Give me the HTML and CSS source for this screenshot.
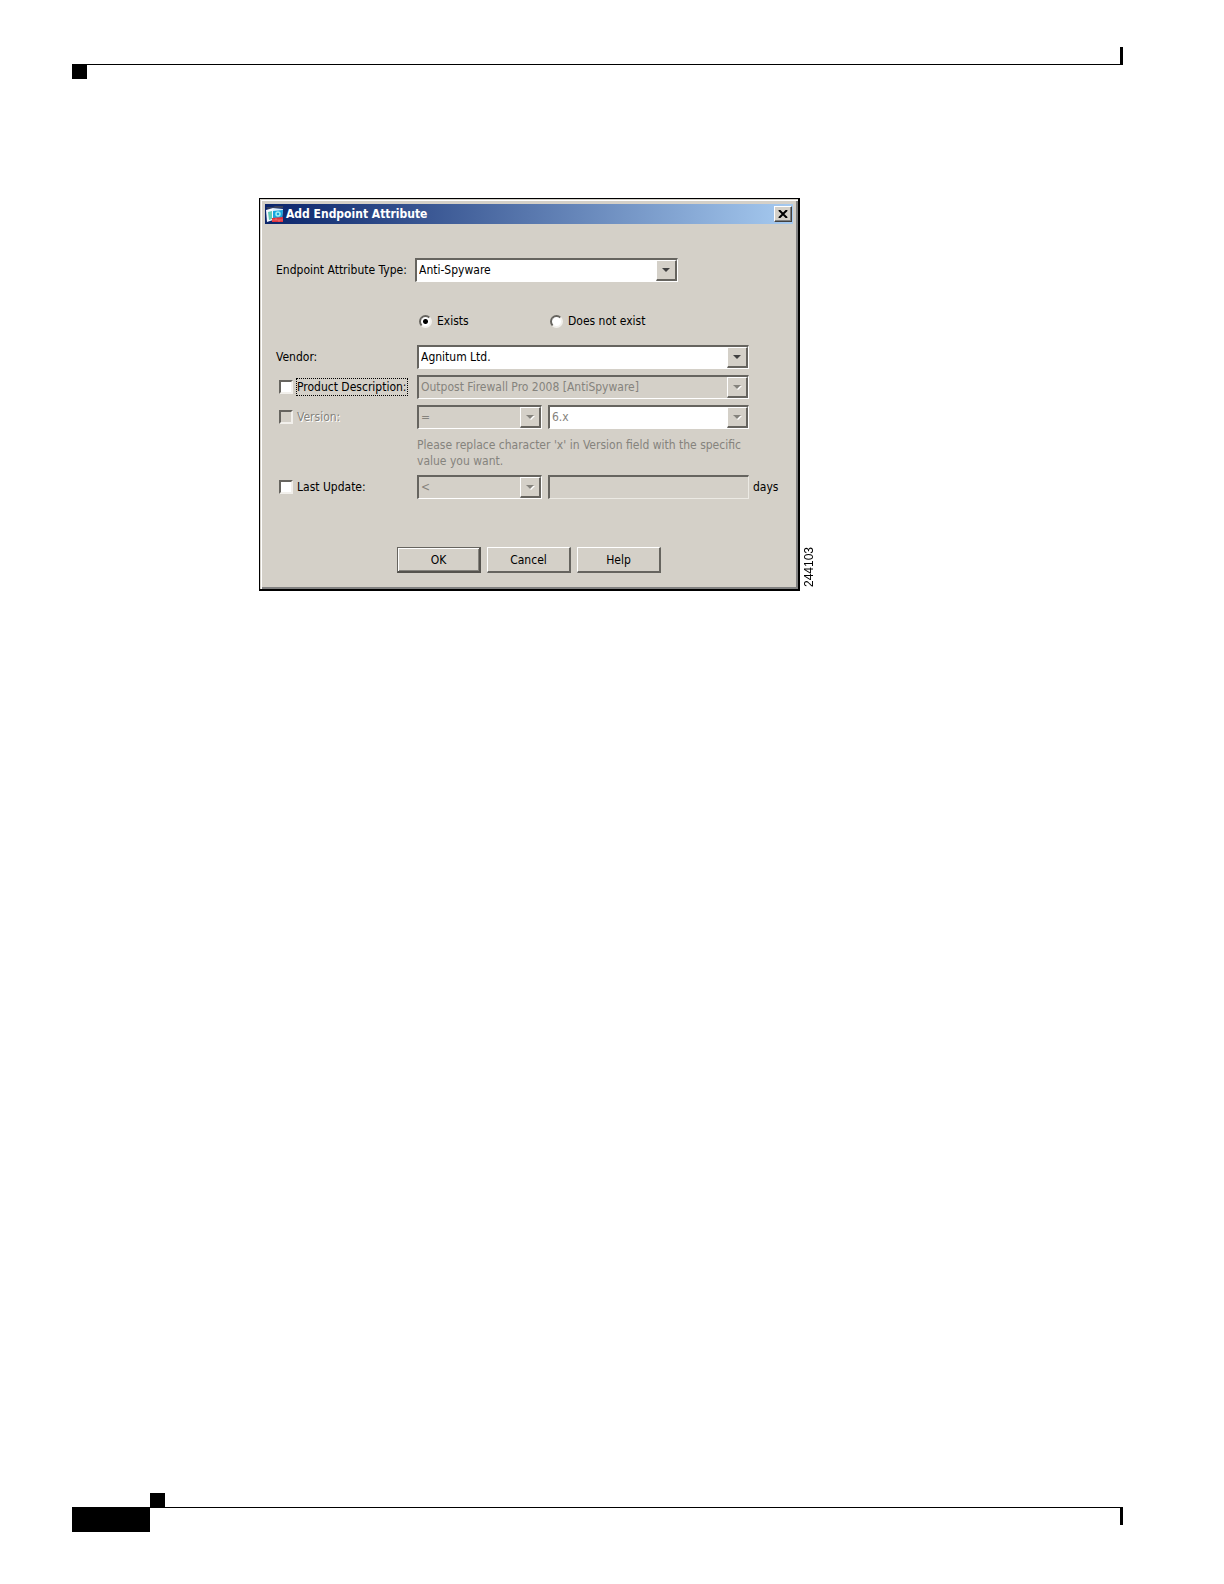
FILE: index.html
```html
<!DOCTYPE html>
<html lang="en">
<head>
<meta charset="utf-8">
<title>Add Endpoint Attribute</title>
<link rel="stylesheet" href="styles.css">
</head>
<body>
<header class="page-head">
  <span class="head-tick"></span>
  <span class="head-square"></span>
</header>

<main class="content">
  <figure class="figure">
    <form class="dialog">
      <div class="titlebar">
        <svg class="app-icon" viewBox="0 0 18 18" aria-hidden="true">
          <path d="M0 2h7l2-1h8v2H9L2 4z" fill="#39415c"/>
          <path d="M0 5l7-2v12l-6 2z" fill="#f4f8ff"/>
          <path d="M2 7l4-1v8l-3 1z" fill="#5fc9b4"/>
          <path d="M7 3l10 1-1 9-9 1z" fill="#d9ecfa"/>
          <path d="M7 6l10-1-1 8-9 1z" fill="#17a5de"/>
          <circle cx="12" cy="9" r="2" fill="none" stroke="#9df0f4" stroke-width="1.5"/>
          <path d="M6 13l11-1v5H6z" fill="#e0323c"/>
          <path d="M6 15h11M10 13v2M13 15v2" stroke="#f28b86" stroke-width=".6"/>
        </svg>
        <h1 class="title">Add Endpoint Attribute</h1>
        <button type="button" class="close" aria-label="Close">
          <svg viewBox="0 0 10 8" aria-hidden="true"><path d="M1 0l8 8M9 0L1 8" stroke="#000" stroke-width="2"/></svg>
        </button>
      </div>

      <div class="fields">
        <div class="type-row">
          <label for="type">Endpoint Attribute Type:</label>
          <div class="combo">
            <select id="type"><option>Anti-Spyware</option></select>
            <span class="arrow"><svg viewBox="0 0 8 4"><path d="M0 0h8L4 4z"/></svg></span>
          </div>
        </div>

        <div class="radio-row">
          <label class="choice"><input type="radio" name="presence" checked>Exists</label>
          <label class="choice"><input type="radio" name="presence">Does not exist</label>
        </div>

        <div class="row">
          <label for="vendor">Vendor:</label>
          <div class="combo wide">
            <select id="vendor"><option>Agnitum Ltd.</option></select>
            <span class="arrow"><svg viewBox="0 0 8 4"><path d="M0 0h8L4 4z"/></svg></span>
          </div>
        </div>

        <div class="row">
          <label class="check"><input type="checkbox"><span class="focused">Product Description:</span></label>
          <div class="combo wide off">
            <select aria-label="Product" disabled><option>Outpost Firewall Pro 2008 [AntiSpyware]</option></select>
            <span class="arrow"><svg viewBox="0 0 8 4"><path d="M0 0h8L4 4z"/></svg></span>
          </div>
        </div>

        <div class="row">
          <label class="check muted"><input type="checkbox" disabled><span>Version:</span></label>
          <div class="combo short off">
            <select aria-label="Version comparison" disabled><option>=</option></select>
            <span class="arrow"><svg viewBox="0 0 8 4"><path d="M0 0h8L4 4z"/></svg></span>
          </div>
          <div class="combo off editable">
            <select aria-label="Version number" disabled><option>6.x</option></select>
            <span class="arrow"><svg viewBox="0 0 8 4"><path d="M0 0h8L4 4z"/></svg></span>
          </div>
          <p class="note">Please replace character 'x' in Version field with the specific value you want.</p>
        </div>

        <div class="row">
          <label class="check"><input type="checkbox"><span>Last Update:</span></label>
          <div class="combo short off">
            <select aria-label="Update comparison" disabled><option>&lt;</option></select>
            <span class="arrow"><svg viewBox="0 0 8 4"><path d="M0 0h8L4 4z"/></svg></span>
          </div>
          <input class="days" id="days" type="text" disabled>
          <label for="days">days</label>
        </div>
      </div>

      <div class="actions">
        <button type="button" class="btn default">OK</button>
        <button type="button" class="btn">Cancel</button>
        <button type="button" class="btn">Help</button>
      </div>
    </form>
    <figcaption class="figure-id">244103</figcaption>
  </figure>
</main>

<footer class="page-foot">
  <span class="foot-square"></span>
  <div class="foot-row">
    <span class="foot-block"></span>
    <span class="foot-tick"></span>
  </div>
</footer>
</body>
</html>
```

FILE: styles.css
```css
* { box-sizing: border-box; }

body {
  margin: 0;
  min-height: 100vh;
  padding: 47px 101px 52px 72px;
  display: flex;
  flex-direction: column;
  background: #fff;
  color: #000;
  font: 12px/16px "DejaVu Sans Condensed", "DejaVu Sans", sans-serif;
}

/* page rules */
.page-head { display: flex; flex-direction: column; }
.head-tick { align-self: flex-end; width: 3px; height: 17px; background: #000; }
.page-head::before { content: ""; order: 1; height: 1px; background: #000; }
.head-square { order: 2; width: 15px; height: 14px; background: #000; }

.page-foot { margin-top: auto; }
.foot-square { display: block; width: 15px; height: 14px; margin-left: 78px; background: #000; }
.foot-row { display: flex; justify-content: space-between; border-top: 1px solid #000; }
.foot-block { width: 78px; height: 24px; background: #000; }
.foot-tick { width: 3px; height: 17px; background: #000; }

/* figure */
.content { padding: 119px 0 40px 187px; }
.figure { margin: 0; display: flex; align-items: flex-end; gap: 2px; }
.figure-id {
  writing-mode: vertical-rl;
  transform: rotate(180deg);
  margin-bottom: 4px;
  font: 12px/14px "Liberation Sans", Arial, sans-serif;
}

.dialog {
  flex: 0 1 541px;
  padding: 5px;
  background: #d4d0c8;
  border: 1px solid #000;
  border-width: 1px 2px 2px 1px;
  box-shadow: inset 1px 1px #d4d0c8, inset 2px 2px #fff, inset -2px -2px #808080;
}

.titlebar {
  display: flex;
  align-items: center;
  height: 20px;
  padding: 0 1px;
  background: linear-gradient(90deg, #0a246a, #a6caf0);
}
.app-icon { width: 18px; height: 18px; }
.title {
  flex: 1;
  margin: 0 0 0 2px;
  color: #fff;
  font-size: 12px;
  line-height: 20px;
  font-weight: bold;
}
.close {
  display: grid;
  place-items: center;
  width: 18px;
  height: 16px;
  padding: 0;
  background: #d4d0c8;
  border: 1px solid;
  border-color: #fff #404040 #404040 #fff;
  box-shadow: inset -1px -1px #808080;
}
.close svg { width: 10px; height: 8px; }

.fields { padding: 34px 10px 0 11px; }

.type-row { display: grid; grid-template-columns: 135px 263px; gap: 4px; align-items: center; }
.radio-row {
  display: grid;
  grid-template-columns: 131px auto;
  align-items: center;
  height: 24px;
  margin: 27px 0 12px;
  padding-left: 143px;
}
.choice { display: flex; align-items: center; gap: 5px; }

.row {
  display: grid;
  grid-template-columns: 137px 127px 201px auto;
  column-gap: 4px;
  row-gap: 8px;
  align-items: center;
  margin-bottom: 6px;
}
.wide { grid-column: 2 / 4; }
.short { width: 125px; }
.note { grid-column: 2 / 4; margin: 0; color: #85837d; }

.check { display: flex; align-items: center; gap: 4px; padding-left: 3px; white-space: nowrap; }
.focused { outline: 1px dotted #000; }
.muted { color: #85837d; text-shadow: 1px 1px #fff; }

input[type="checkbox"], input[type="radio"] {
  appearance: none;
  flex: none;
  margin: 0;
  width: 14px;
  height: 14px;
  background: #fff;
  border: 2px solid;
  border-color: #66645f #f2f0ec #f2f0ec #66645f;
}
input[type="checkbox"]:disabled { background: #d4d0c8; }
input[type="radio"] { width: 13px; height: 13px; border-radius: 50%; }
input[type="radio"]:checked { background: radial-gradient(circle, #000 2px, #fff 3px); }

/* sunken boxes */
.combo, .days {
  height: 24px;
  background: #fff;
  border: 1px solid;
  border-width: 2px 1px 1px 2px;
  border-color: #66645f #fff #fff #66645f;
}
.combo { position: relative; }
.combo select {
  appearance: none;
  display: block;
  width: 100%;
  height: 20px;
  margin: 0;
  padding: 0 22px 0 2px;
  border: 0;
  border-radius: 0;
  background: none;
  color: #000;
  font: inherit;
  opacity: 1;
}
.combo.off select { color: #85837d; }
.off, .days { background: #d4d0c8; }
.editable { background: #fff; }
.days { width: 100%; padding: 0 2px; font: inherit; border-radius: 0; border-color: #66645f #eceae4 #eceae4 #66645f; }

.arrow {
  position: absolute;
  top: 0;
  right: 0;
  display: grid;
  place-items: center;
  width: 21px;
  height: 21px;
  background: #d4d0c8;
  border: 1px solid;
  border-width: 1px 2px 2px 1px;
  border-color: #fff #66645f #66645f #fff;
  pointer-events: none;
}
.arrow svg { width: 8px; height: 4px; fill: #404040; }
.off .arrow svg { fill: #85837d; filter: drop-shadow(1px 1px 0 #fff); }

.actions { display: flex; justify-content: center; gap: 6px; padding: 42px 0 11px; }
.btn {
  width: 84px;
  height: 26px;
  padding: 0;
  background: #d4d0c8;
  color: #000;
  font: inherit;
  border: 1px solid;
  border-width: 1px 2px 2px 1px;
  border-color: #fff #66645f #66645f #fff;
}
.default {
  border-color: #66645f #55534e #55534e #66645f;
  box-shadow: inset 1px 1px #fff, inset -1px -1px #85837d;
}
```
